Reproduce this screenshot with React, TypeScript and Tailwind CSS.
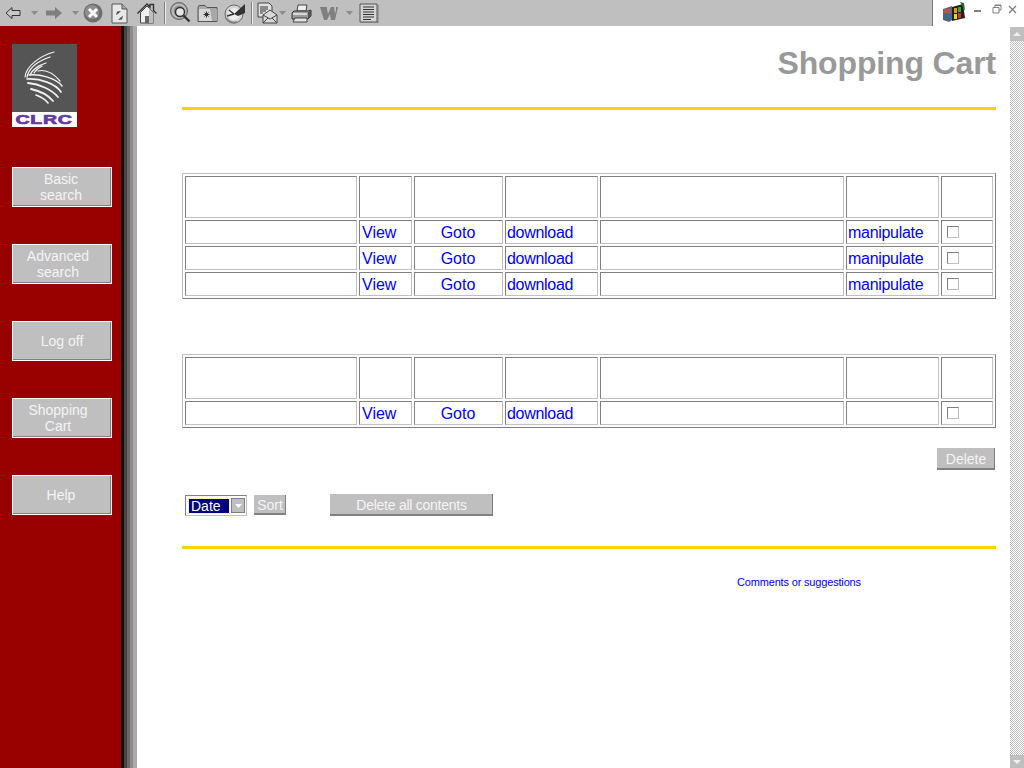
import React from 'react';

const navItems = [
    { lines: ['Basic', 'search'], shift: 'pr-[2px]' },
    { lines: ['Advanced', 'search'], shift: 'pr-[8px]' },
    { lines: ['Log off'], shift: 'pl-[0px]' },
    { lines: ['Shopping', 'Cart'], shift: 'pr-[8px]' },
    { lines: ['Help'], shift: 'pr-[2px]' },
];

const Tri = ({ className = '' }: { className?: string }) => (
    <svg width="7" height="4" viewBox="0 0 7 4" className={className}>
        <path d="M0 0h7L3.5 4z" fill="#8a8a8a" />
    </svg>
);

const Toolbar = () => (
    <div className="flex h-[26px] bg-[#c0bfc0]">
        <div className="flex flex-1 items-center border-r border-[#808080] pl-[5px]">
            <svg width="16" height="14" viewBox="0 0 16 14">
                <path d="M7 1.500L1 7l6 5.500V9.500h8v-5H7z" fill="#c8c8c8" stroke="#333" strokeWidth="1" />
            </svg>
            <Tri className="ml-[10px]" />
            <svg width="17" height="14" viewBox="0 0 17 14" className="ml-[8px]">
                <path d="M9 1l7 6-7 6V9.500H0v-5h9z" fill="#7f7f7f" />
            </svg>
            <Tri className="ml-[9px]" />
            <svg width="20" height="20" viewBox="0 0 20 20" className="ml-[4px]">
                <circle cx="10" cy="10" r="9.500" fill="#6f6f6f" />
                <circle cx="9" cy="9" r="7" fill="#8f8f8f" />
                <path d="M6 6l8 8M14 6l-8 8" stroke="#fff" strokeWidth="3" />
            </svg>
            <svg width="17" height="21" viewBox="0 0 17 21" className="ml-[8px]">
                <path d="M1 1h10l5 5v14H1z" fill="#e8e8e8" stroke="#555" />
                <path d="M11 1v5h5" fill="#aaa" stroke="#555" />
                <path d="M10 8L6 8.500 5 12l2-1 1-1zM7 17l4-.500 1-3.500-2 1-1 1z" fill="#555" />
            </svg>
            <svg width="20" height="22" viewBox="0 0 20 22" className="ml-[9px]">
                <path d="M.500 11.500L10 2l3 3V2.500h3.500v6l3 3" fill="none" stroke="#333" strokeWidth="1.400" />
                <path d="M3.500 10.500v10.500h13V10.500L10 4z" fill="#efefef" stroke="#444" />
                <path d="M12 6l4.500 5v10H12z" fill="#bdbdbd" />
                <path d="M8 21v-7h4v7z" fill="#666" />
            </svg>
            <div className="ml-[7px] h-[22px] w-[2px] border-l border-[#808080] bg-[#eee]" />
            <svg width="21" height="22" viewBox="0 0 21 22" className="ml-[4px]">
                <circle cx="9" cy="9" r="8.500" fill="#8f8f8f" stroke="#666" />
                <circle cx="9" cy="9" r="6.500" fill="none" stroke="#bdbdbd" strokeWidth="2" />
                <circle cx="10" cy="10" r="4.500" fill="#e4e4e4" stroke="#333" strokeWidth="1.500" />
                <path d="M13.500 13.500l6 6" stroke="#333" strokeWidth="2.400" />
            </svg>
            <svg width="21" height="18" viewBox="0 0 21 18" className="ml-[6px]">
                <path d="M1 3.500l1-2h6l2 2h10v14H1z" fill="#a9a9a9" stroke="#555" />
                <path d="M2 5h18v12H2z" fill="#d8d8d8" />
                <path d="M13 5h7v12h-5z" fill="#a8a8a8" />
                <path d="M9.500 7.500v6M6.500 10.500h6M7.500 8.500l4 4M11.500 8.500l-4 4" stroke="#333" />
            </svg>
            <svg width="21" height="21" viewBox="0 0 21 21" className="ml-[6px]">
                <circle cx="10" cy="11" r="9" fill="#d4d4d4" stroke="#666" />
                <circle cx="10" cy="11" r="6" fill="#eee" />
                <path d="M10 11L21 1v9l-7 3z" fill="#333" />
                <path d="M10 11L5 7M10 11L3 13" stroke="#333" strokeWidth="1.400" />
                <path d="M2 15a9 9 0 0 0 11 4" fill="none" stroke="#808080" strokeWidth="2" />
            </svg>
            <div className="ml-[6px] h-[22px] w-[2px] border-l border-[#808080] bg-[#eee]" />
            <svg width="21" height="22" viewBox="0 0 21 22" className="ml-[4px]">
                <path d="M1 1h11l3 3v11H1z" fill="#e0e0e0" stroke="#444" />
                <path d="M3 5h8M3 7h8M3 9h6M3 11h3" stroke="#333" />
                <path d="M6 13l7-5 7 5v8H6z" fill="#d8d8d8" stroke="#444" />
                <path d="M6 13l7 4 7-4M6 21l5-5M20 21l-5-5" fill="none" stroke="#444" />
            </svg>
            <Tri className="ml-[1px]" />
            <svg width="21" height="19" viewBox="0 0 21 19" className="ml-[5px]">
                <path d="M7 1h9l-1 6H6z" fill="#eee" stroke="#444" />
                <path d="M3 7h14l3-1v6l-3 3H1V9z" fill="#9a9a9a" stroke="#333" />
                <path d="M2 9h14v2H2z" fill="#d8d8d8" />
                <path d="M4 14h12v4H2z" fill="#e4e4e4" stroke="#444" />
                <path d="M17 8l3-2v6l-3 3z" fill="#555" />
            </svg>
            <svg width="18" height="15" viewBox="0 0 18 15" className="ml-[8px]">
                <path d="M0 1h7v2l1 5 3-7h3l1 7 1-4V1h2l-3 13h-4l-1-6-3 6H4z" fill="#7f7f7f" />
            </svg>
            <Tri className="ml-[8px]" />
            <svg width="20" height="22" viewBox="0 0 20 22" className="ml-[6px]">
                <path d="M1 2h17v18H1z" fill="#d4d4d4" stroke="#555" />
                <path d="M18 3h1.500v18H3V20h15z" fill="#808080" />
                <path d="M4 5h11M4 7.500h11M4 10h11M4 12.500h11M4 15h11M4 17.500h8" stroke="#333" />
            </svg>
        </div>
        <div className="flex w-[91px] items-start bg-white pl-[9px] pt-[2px]">
            <svg width="24" height="21" viewBox="0 0 24 21">
                <path d="M1 7l9-3v14l-3 2-6-2z" fill="#6b5f68" />
                <path d="M2 7h7v4H2z" fill="#a85d4d" />
                <path d="M2 12h8v6H2z" fill="#3c6a8c" />
                <path d="M10 5l11-3 2 14-13 3z" fill="#222" />
                <path d="M12 6h3v5h-3z" fill="#d92" />
                <path d="M16 5h3v5h-3z" fill="#3a3" />
                <path d="M12 12h3v5h-3z" fill="#e8d820" />
                <path d="M16 11h3v5h-3z" fill="#c33" />
                <path d="M18 0l4 1 1 8z" fill="#2a6a30" />
            </svg>
            <div className="ml-[8px] mt-[8px] h-[2px] w-[7px] bg-[#808080]" />
            <svg width="10" height="10" viewBox="0 0 10 10" className="ml-[11px] mt-[2px]">
                <path d="M3 3V1h6v5H7M1 3.500h6v5.500H1z" fill="none" stroke="#808080" />
                <path d="M1 3.500h6M3 1.500h6" stroke="#808080" />
            </svg>
            <svg width="9" height="9" viewBox="0 0 9 9" className="ml-[6px] mt-[3px]">
                <path d="M1 1l7 7M8 1L1 8" stroke="#808080" strokeWidth="1.300" />
            </svg>
        </div>
    </div>
);

const Logo = () => (
    <div className="w-[65px]">
        <div className="h-[68px] bg-[#555555]">
            <svg width="65" height="68" viewBox="0 0 65 68">
                <g fill="none" stroke="#f2f2f2" strokeLinecap="round">
                    <path d="M42 8C28 12 14 22 13 33" strokeWidth="1.100" />
                    <path d="M38 13C26 17 17 24 15 33" strokeWidth="1.300" />
                    <path d="M34 19C27 21 20 26 18 31" strokeWidth="1.300" />
                    <path d="M30 22C26 24 24 26 22 29" strokeWidth="1.200" />
                    <path d="M26 27C34 25 42 30 48 37" strokeWidth="1.200" />
                    <path d="M17 31C28 30 44 34 50 42" strokeWidth="1.500" />
                    <path d="M15 35C28 34 44 40 49 48" strokeWidth="1.700" />
                    <path d="M16 39C28 40 40 46 46 53" strokeWidth="1.800" />
                    <path d="M19 45C28 47 36 51 41 57" strokeWidth="1.800" />
                    <path d="M24 51C29 53 33 55 36 59" strokeWidth="1.600" />
                </g>
            </svg>
        </div>
        <div className="flex h-[15px] items-center justify-center overflow-hidden bg-white font-['Liberation_Sans',sans-serif] text-[13px] font-bold leading-none tracking-[0.5px] text-[#5f3d9c] [-webkit-text-stroke:0.7px_#5f3d9c]">
            <span className="inline-block scale-x-[1.5]">CLRC</span>
        </div>
    </div>
);

const Sidebar = () => (
    <aside className="flex h-full w-[137px] shrink-0">
        <div className="h-full w-[121px] bg-[#990000] pl-[12px] pt-[18px]">
            <Logo />
            <div className="mt-[40px] flex flex-col gap-[37px]">
                {navItems.map((item) => (
                    <div
                        key={item.lines[0]}
                        className={`flex h-[40px] w-[100px] flex-col items-center justify-center border border-white border-r-[#e8e8e8] bg-[#c0bfc0] text-center text-[14px] leading-[16px] text-[#f4f4f4] shadow-[inset_-1px_-1px_0_#808080] ${item.shift}`}
                    >
                        {item.lines.map((line) => (
                            <span key={line}>{line}</span>
                        ))}
                    </div>
                ))}
            </div>
        </div>
        <div className="h-full w-[3px] bg-[#101010]" />
        <div className="h-full w-[3px] bg-[#444444]" />
        <div className="h-full w-[3px] bg-[#666666]" />
        <div className="h-full w-[3px] bg-[#8c8c8c]" />
        <div className="h-full w-[4px] bg-[#ababab]" />
    </aside>
);

const Cell = ({ children, center = false, tight = false }: { children?: React.ReactNode; center?: boolean; tight?: boolean }) => (
    <td className={`border border-t-[#808080] border-l-[#808080] border-r-[#c0c0c0] border-b-[#c0c0c0] pb-0 pt-[2px] text-[16px] leading-[18px] text-[#0000ff] ${center ? 'pr-[3px] text-center' : 'text-left'} ${tight ? 'pl-[1px] tracking-[-0.3px]' : 'pl-[2px]'}`}>
        {children}
    </td>
);

const Check = () => (
    <div className="mb-[2px] ml-[3px] h-[12px] w-[12px] border border-t-[#808080] border-l-[#808080] border-r-[#c0c0c0] border-b-[#c0c0c0] bg-white" />
);

const HeadRow = () => (
    <tr className="h-[42px]">
        {[0, 1, 2, 3, 4, 5, 6].map((i) => (
            <Cell key={i} />
        ))}
    </tr>
);

const ItemRow = ({ manipulate = true }: { manipulate?: boolean }) => (
    <tr className="h-[24px]">
        <Cell />
        <Cell>View</Cell>
        <Cell center>Goto</Cell>
        <Cell tight>download</Cell>
        <Cell />
        <Cell tight>{manipulate ? 'manipulate' : ''}</Cell>
        <Cell>
            <Check />
        </Cell>
    </tr>
);

const CartTable = ({ children }: { children: React.ReactNode }) => (
    <table className="w-[814px] table-fixed border-separate border-spacing-[2px] border border-t-[#c0c0c0] border-l-[#c0c0c0] border-r-[#808080] border-b-[#808080]">
        <colgroup>
            <col className="w-[172px]" />
            <col className="w-[53px]" />
            <col className="w-[89px]" />
            <col className="w-[93px]" />
            <col className="w-[244px]" />
            <col className="w-[93px]" />
            <col className="w-[52px]" />
        </colgroup>
        <tbody>{children}</tbody>
    </table>
);

const GreyButton = ({ label, className }: { label: string; className: string }) => (
    <div className={`flex items-center justify-center bg-[#c0bfc0] text-[14px] leading-none text-[#f4f4f4] shadow-[inset_-1px_-2px_0_#808080] ${className}`}>
        {label}
    </div>
);

const Scrollbar = () => (
    <div className="mt-[1px] flex h-[741px] w-[14px] shrink-0 flex-col bg-[repeating-conic-gradient(#c0c0c0_0_25%,#ffffff_0_50%)] bg-[length:2px_2px]">
        <div className="flex h-[14px] items-center justify-center bg-[#c0bfc0]">
            <svg width="8" height="4" viewBox="0 0 8 4">
                <path d="M0 4h8L4 0z" fill="#f2f2f2" />
            </svg>
        </div>
        <div className="flex-1" />
        <div className="flex h-[13px] items-center justify-center bg-[#c0bfc0]">
            <svg width="8" height="4" viewBox="0 0 8 4">
                <path d="M0 0h8L4 4z" fill="#f2f2f2" />
            </svg>
        </div>
    </div>
);

const App = () => {
    return (
        <div className="flex h-[768px] w-[1024px] flex-col overflow-hidden bg-white font-['Liberation_Sans',Arial,sans-serif]">
            <Toolbar />
            <div className="flex h-[742px]">
                <Sidebar />
                <main className="flex-1 pl-[45px] pr-[14px]">
                    <h1 className="mt-[19px] h-[37px] text-right text-[32px] font-bold leading-[37px] tracking-[-0.15px] text-[#999999]">
                        Shopping Cart
                    </h1>
                    <div className="mt-[25px] h-[3px] bg-[#ffd200]" />
                    <div className="mt-[63px]">
                        <CartTable>
                            <HeadRow />
                            <ItemRow />
                            <ItemRow />
                            <ItemRow />
                        </CartTable>
                    </div>
                    <div className="mt-[55px]">
                        <CartTable>
                            <HeadRow />
                            <ItemRow manipulate={false} />
                        </CartTable>
                    </div>
                    <div className="mt-[20px] flex justify-end pr-[1px]">
                        <GreyButton label="Delete" className="h-[22px] w-[58px]" />
                    </div>
                    <div className="mt-[24px] flex items-start pl-[3px]">
                        <div className="mt-[1px] flex h-[21px] w-[62px] items-center border border-t-[#808080] border-l-[#808080] border-r-[#c0c0c0] border-b-[#c0c0c0] pl-[3px]">
                            <div className="h-[14px] w-[40px] bg-[#000080] pl-[2px] text-[14px] leading-[15px] text-white outline-1 outline-dotted outline-[#ffe680]">
                                Date
                            </div>
                            <div className="ml-[2px] flex h-[15px] w-[14px] items-center justify-center border border-[#808080] bg-[#c0bfc0]">
                                <svg width="7" height="4" viewBox="0 0 7 4">
                                    <path d="M0 0h7L3.500 4z" fill="#fff" />
                                </svg>
                            </div>
                        </div>
                        <GreyButton label="Sort" className="ml-[7px] mt-[1px] h-[20px] w-[32px]" />
                        <GreyButton label="Delete all contents" className="ml-[44px] h-[22px] w-[163px] tracking-[-0.25px]" />
                    </div>
                    <div className="mt-[30px] h-[3px] bg-[#ffd200]" />
                    <div className="mt-[27px] pl-[555px] text-[11px] leading-[13px] tracking-[-0.17px] text-[#0000ff]">
                        Comments or suggestions
                    </div>
                </main>
                <Scrollbar />
            </div>
        </div>
    );
};

export default App;
